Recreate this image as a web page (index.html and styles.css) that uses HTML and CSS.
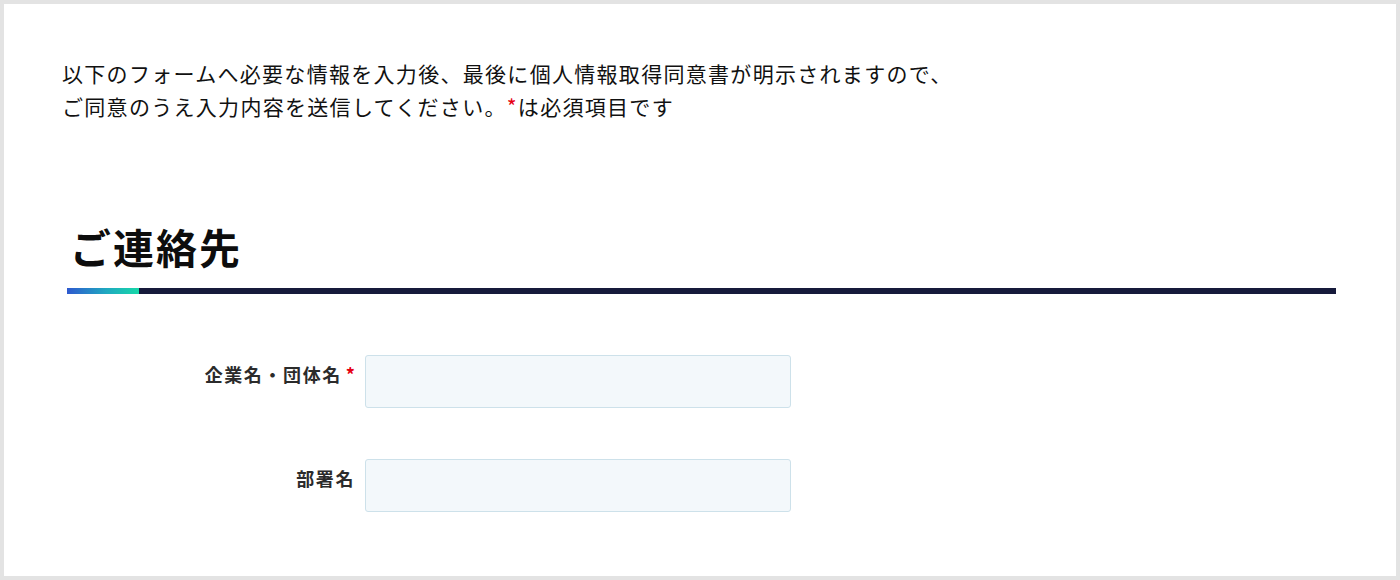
FILE: index.html
```html
<!DOCTYPE html>
<html lang="ja">
<head>
<meta charset="utf-8">
<title>ご連絡先</title>
<link rel="stylesheet" href="styles.css">
</head>
<body>
<div class="frame">
  <p class="intro">以下のフォームへ必要な情報を入力後、最後に個人情報取得同意書が明示されますので、<br>ご同意のうえ入力内容を送信してください。<span class="req">*</span>は必須項目です</p>
  <section class="section">
    <h2 class="heading">ご連絡先</h2>
    <div class="bar"><span class="bar-accent"></span></div>
    <div class="form">
      <div class="row">
        <label class="label" for="company">企業名・団体名<span class="req mark">*</span></label>
        <input class="input" id="company" type="text">
      </div>
      <div class="row">
        <label class="label" for="dept">部署名</label>
        <input class="input" id="dept" type="text">
      </div>
    </div>
  </section>
</div>
</body>
</html>
```
FILE: styles.css
```css
* { box-sizing: border-box; }
html, body { margin: 0; padding: 0; background: #ffffff; }
body {
  font-family: "Noto Sans CJK JP", "Noto Sans", sans-serif;
  color: #1a1a1a;
}
.frame {
  width: 1400px;
  height: 580px;
  border: 4px solid #e3e3e3;
  padding: 53px 60px 0 58px;
  overflow: hidden;
}
.intro {
  margin: 0;
  font-size: 21px;
  line-height: 33px;
  letter-spacing: 1.3px;
  color: #111111;
}
.req { color: #e60012; }
.section {
  margin: 95px 0 0 5px;
}
.heading {
  margin: 0;
  padding-left: 3px;
  font-size: 41px;
  line-height: 56px;
  font-weight: 700;
  letter-spacing: 2px;
  color: #0d0d0d;
}
.bar {
  margin-top: 14px;
  height: 6px;
  background: #161a3b;
  display: flex;
}
.bar-accent {
  width: 72px;
  height: 100%;
  background: linear-gradient(90deg, #2e59cf 0%, #1fa9c0 55%, #17d8a8 100%);
}
.form {
  margin-top: 61px;
  display: flex;
  flex-direction: column;
  gap: 51px;
}
.row {
  display: grid;
  grid-template-columns: 288px 426px;
  column-gap: 10px;
  align-items: start;
}
.label {
  padding-top: 6px;
  text-align: right;
  font-size: 18px;
  line-height: 26px;
  font-weight: 700;
  letter-spacing: 1.6px;
  color: #2b2b2b;
}
.mark {
  margin-left: 4px;
  letter-spacing: 0;
}
.input {
  display: block;
  width: 426px;
  height: 53px;
  margin: 0;
  background: #f3f8fb;
  border: 1px solid #cde1ea;
  border-radius: 3px;
  font-family: inherit;
  font-size: 16px;
  padding: 0 12px;
}
```
